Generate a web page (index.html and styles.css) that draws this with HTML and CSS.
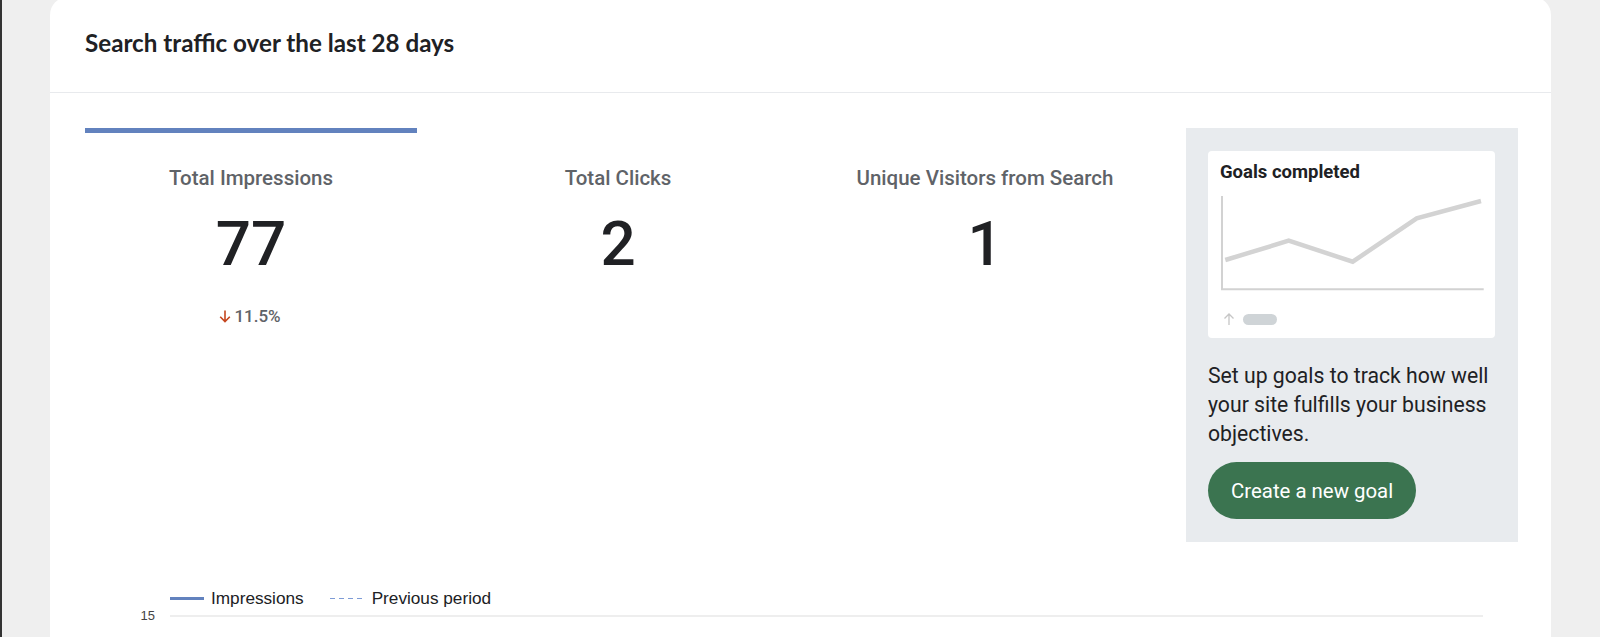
FILE: index.html
```html
<!DOCTYPE html>
<html lang="en">
<head>
<meta charset="utf-8">
<title>Search traffic</title>
<link rel="stylesheet" href="styles.css">
</head>
<body>
<div class="page">
  <section class="card">
    <header class="card-header">
      <h2 class="card-title">Search traffic over the last 28 days</h2>
    </header>
    <div class="card-body">
      <div class="stats">
        <div class="metric is-active">
          <div class="metric-bar"></div>
          <div class="metric-label">Total Impressions</div>
          <div class="metric-value">77</div>
          <div class="metric-change">
            <svg class="arrow-down" width="12" height="13" viewBox="0 0 12 13"><path d="M6 0.5V11.5M1.2 6.8L6 11.6L10.8 6.8" fill="none" stroke="#c5461f" stroke-width="1.6"/></svg>
            <span>11.5%</span>
          </div>
        </div>
        <div class="metric">
          <div class="metric-bar"></div>
          <div class="metric-label">Total Clicks</div>
          <div class="metric-value">2</div>
        </div>
        <div class="metric">
          <div class="metric-bar"></div>
          <div class="metric-label">Unique Visitors from Search</div>
          <div class="metric-value">1</div>
        </div>
        <aside class="goals">
          <div class="goals-card">
            <div class="goals-title">Goals completed</div>
            <svg class="goals-chart" width="264" height="96" viewBox="0 0 264 96">
              <path d="M2 1V94.3H263.7" fill="none" stroke="#d2d2d2" stroke-width="2"/>
              <polyline points="5.3,65 68.7,45.7 132.7,66.7 196.7,23.3 261,6" fill="none" stroke="#d3d3d3" stroke-width="4.5" stroke-linejoin="miter"/>
            </svg>
            <div class="goals-foot">
              <svg width="12" height="12" viewBox="0 0 12 12"><path d="M6 12V1M1.5 5.5L6 1L10.5 5.5" fill="none" stroke="#c6c6c6" stroke-width="1.3"/></svg>
              <span class="pill"></span>
            </div>
          </div>
          <p class="goals-text">Set up goals to track how well your site fulfills your business objectives.</p>
          <button class="btn-goal" type="button">Create a new goal</button>
        </aside>
      </div>
      <div class="chart">
        <div class="legend">
          <span class="legend-item"><span class="swatch solid"></span>Impressions</span>
          <span class="legend-item dashed-item"><span class="swatch dashed"></span>Previous period</span>
        </div>
        <div class="tick-row">
          <span class="tick-label">15</span>
          <span class="gridline"></span>
        </div>
      </div>
    </div>
  </section>
</div>
</body>
</html>
```

FILE: styles.css
```css
* { box-sizing: border-box; }
html, body { margin: 0; padding: 0; }
body {
  background: #efefef;
  overflow: hidden;
  height: 637px;
  font-family: Roboto, "Liberation Sans", Arial, sans-serif;
  color: #202124;
}
.page {
  border-left: 2px solid #333333;
  padding-left: 48px;
  padding-right: 49px;
  min-height: 637px;
}
.card {
  background: #ffffff;
  border-radius: 18px 18px 0 0;
  margin-top: -3px;
  min-height: 700px;
}
.card-header {
  height: 96px;
  display: flex;
  align-items: center;
  padding: 0 35px 4px;
  border-bottom: 1px solid #e8eaed;
}
.card-title {
  margin: 0;
  font-family: Lato, Roboto, sans-serif;
  font-weight: 700;
  font-size: 24.2px;
  color: #202124;
}
.card-body {
  padding: 35px 33px 0 35px;
}
.stats {
  display: grid;
  grid-template-columns: repeat(4, minmax(0, 1fr));
  column-gap: 35px;
  align-items: start;
}
.metric {
  text-align: center;
}
.metric-bar {
  height: 5px;
  background: transparent;
}
.metric.is-active .metric-bar {
  background: #6282be;
}
.metric-label {
  margin-top: 33px;
  font-family: Roboto, sans-serif;
  font-weight: 500;
  font-size: 20.5px;
  line-height: 24px;
  color: #5f6368;
}
.metric-value {
  margin-top: 23px;
  font-family: Roboto, sans-serif;
  font-weight: 500;
  font-size: 62px;
  line-height: 62px;
  color: #202124;
}
.metric-change {
  margin-top: 31px;
  margin-right: 2px;
  display: inline-flex;
  align-items: center;
  gap: 3px;
  font-family: Roboto, sans-serif;
  font-weight: 500;
  font-size: 17px;
  line-height: 20px;
  color: #5f6368;
}
.goals {
  background: #e8ebee;
  padding: 23px 23px 23px 22px;
}
.goals-card {
  background: #ffffff;
  border-radius: 4px;
  padding: 12px 11px 13px 12px;
}
.goals-title {
  font-family: Roboto, sans-serif;
  font-weight: 700;
  font-size: 18.5px;
  line-height: 18px;
  color: #202124;
}
.goals-chart {
  display: block;
  margin-top: 14px;
  overflow: visible;
}
.goals-foot {
  margin-top: 22px;
  height: 12px;
  display: flex;
  align-items: center;
  gap: 8px;
  padding-left: 3px;
}
.goals-foot svg { display: block; }
.pill {
  width: 34px;
  height: 11px;
  border-radius: 6px;
  background: #cfd4d7;
}
.goals-text {
  margin: 24px 0 0;
  font-family: Roboto, sans-serif;
  font-size: 21.2px;
  line-height: 28.8px;
  color: #202124;
}
.btn-goal {
  margin-top: 14px;
  height: 57px;
  padding: 0 23px;
  border: 0;
  border-radius: 29px;
  background: #3b7450;
  color: #ffffff;
  font-family: Roboto, sans-serif;
  font-size: 20.4px;
  display: inline-flex;
  align-items: center;
}
.chart {
  margin-top: 46px;
}
.legend {
  display: flex;
  gap: 26px;
  padding-left: 85px;
  height: 20px;
  align-items: center;
  font-family: "Liberation Sans", Arial, sans-serif;
  font-size: 17.2px;
  line-height: 20px;
  color: #202124;
}
.legend-item {
  display: inline-flex;
  align-items: center;
  gap: 7px;
}
.legend-item.dashed-item { gap: 10px; }
.swatch {
  display: inline-block;
  width: 34px;
}
.swatch.solid {
  height: 3px;
  background: #6282be;
}
.swatch.dashed {
  width: 32px;
  height: 1.5px;
  background: repeating-linear-gradient(90deg, #7d9bd6 0 5px, transparent 5px 9px);
}
.tick-row {
  display: flex;
  align-items: center;
  height: 16px;
}
.tick-label {
  width: 85px;
  padding-right: 15px;
  text-align: right;
  font-family: "Liberation Sans", Arial, sans-serif;
  font-size: 13px;
  line-height: 16px;
  color: #444444;
}
.gridline {
  flex: 1;
  height: 2px;
  margin-right: 35px;
  background: #eeeeee;
}
```
